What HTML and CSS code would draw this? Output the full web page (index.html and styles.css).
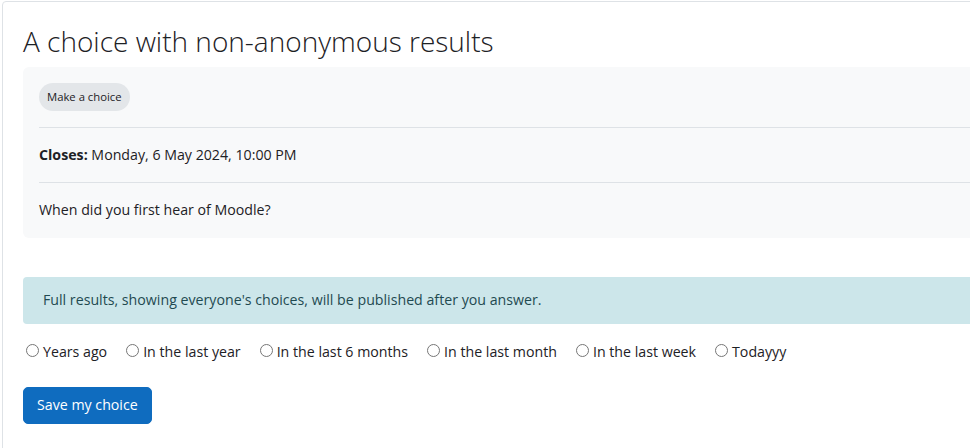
FILE: index.html
```html
<!DOCTYPE html>
<html lang="en">
<head>
  <meta charset="UTF-8" />
  <title>A choice with non-anonymous results</title>
  <link rel="stylesheet" href="styles.css">
</head>
<body>
  <div class="card">
    <h2 class="page-title">A choice with non-anonymous results</h2>

    <div class="activity-info">
      <div class="info-row">
        <span class="badge">Make a choice</span>
      </div>
      <div class="info-row">
        <strong>Closes:</strong> Monday, 6 May 2024, 10:00 PM
      </div>
      <div class="info-row">
        When did you first hear of Moodle?
      </div>
    </div>

    <div class="alert-info">Full results, showing everyone's choices, will be published after you answer.</div>

    <form class="choice-form">
      <div class="options">
        <label class="option"><input type="radio" name="answer" value="1">Years ago</label>
        <label class="option"><input type="radio" name="answer" value="2">In the last year</label>
        <label class="option"><input type="radio" name="answer" value="3">In the last 6 months</label>
        <label class="option"><input type="radio" name="answer" value="4">In the last month</label>
        <label class="option"><input type="radio" name="answer" value="5">In the last week</label>
        <label class="option"><input type="radio" name="answer" value="6">Todayyy</label>
      </div>
      <button type="button" class="btn-primary">Save my choice</button>
    </form>
  </div>
</body>
</html>
```

FILE: styles.css
```css
html, body {
  overflow: hidden;
}
body {
  margin: 0;
  padding: 1px 0 0 2px;
  background: #fff;
  color: #1d2125;
  font-family: 'Open Sans', 'Liberation Sans', sans-serif;
  font-size: 14.2px;
  line-height: 22.5px;
}
.card {
  width: 1000px;
  border: 1px solid #dee2e6;
  border-radius: 4px;
  padding: 20px;
  min-height: 500px;
}
.page-title {
  margin: 3px 0 8px;
  font-size: 28px;
  font-weight: 300;
  line-height: 1.2;
  color: #1d2125;
}
.activity-info {
  background: #f8f9fa;
  border-radius: 6px;
  padding: 0 16px;
}
.info-row {
  padding: 16px 0;
  border-top: 1px solid #dee2e6;
}
.info-row:first-child {
  border-top: none;
}
.badge {
  display: inline-block;
  background: #e3e6e9;
  color: #1d2125;
  font-size: 11.3px;
  line-height: 28px;
  padding: 0 8px;
  border-radius: 14px;
  vertical-align: top;
}
.alert-info {
  margin-top: 39px;
  background: #cce6ea;
  color: #1f4a51;
  padding: 12px 20px 13px;
  border-radius: 4px 0 0 4px;
}
.choice-form {
  margin-top: 17px;
}
.options {
  display: flex;
  gap: 16px;
}
.option input {
  margin: 3px 4px 0 3px;
}
.btn-primary {
  margin-top: 23px;
  background: #0f6cbf;
  color: #fff;
  border: 1px solid #0f6cbf;
  border-radius: 5px;
  padding: 6px 13px 7px;
  font-family: inherit;
  font-size: 14.2px;
  line-height: 22.5px;
}
```
